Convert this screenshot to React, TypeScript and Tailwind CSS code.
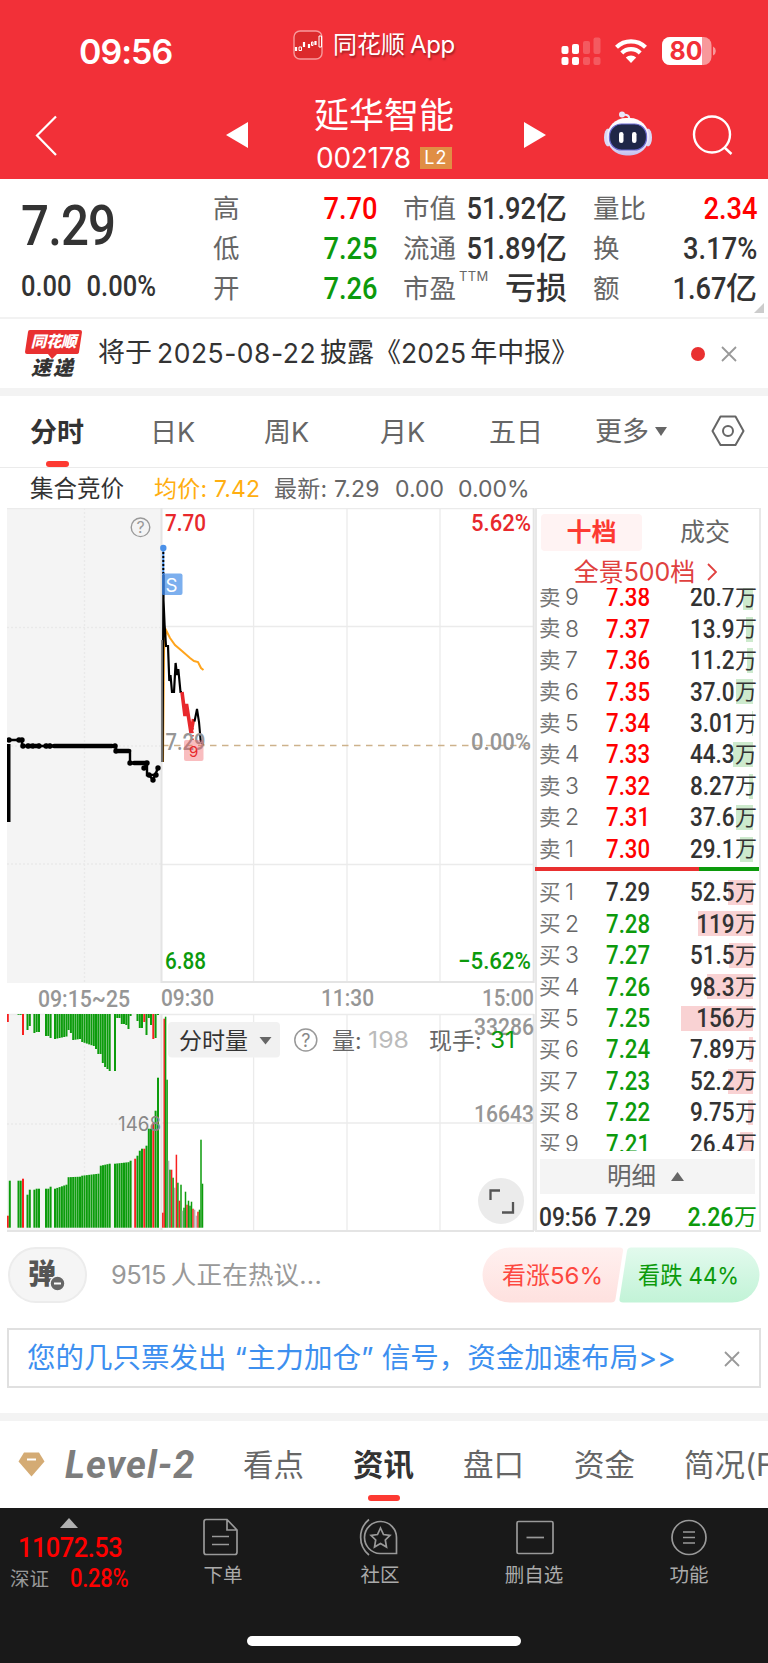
import type { ReactNode } from "react";

const GREEN = "#0c9a0c";
const RED = "#e8282c";

const sells = [
    { level: 9, price: "7.38", volume: "20.7", bar: 10 },
    { level: 8, price: "7.37", volume: "13.9", bar: 7 },
    { level: 7, price: "7.36", volume: "11.2", bar: 6 },
    { level: 6, price: "7.35", volume: "37.0", bar: 17 },
    { level: 5, price: "7.34", volume: "3.01", bar: 1.5 },
    { level: 4, price: "7.33", volume: "44.3", bar: 20 },
    { level: 3, price: "7.32", volume: "8.27", bar: 4 },
    { level: 2, price: "7.31", volume: "37.6", bar: 17 },
    { level: 1, price: "7.30", volume: "29.1", bar: 13 },
];

const buys = [
    { level: 1, price: "7.29", volume: "52.5", bar: 25 },
    { level: 2, price: "7.28", volume: "119", bar: 55 },
    { level: 3, price: "7.27", volume: "51.5", bar: 24 },
    { level: 4, price: "7.26", volume: "98.3", bar: 46 },
    { level: 5, price: "7.25", volume: "156", bar: 72 },
    { level: 6, price: "7.24", volume: "7.89", bar: 4 },
    { level: 7, price: "7.23", volume: "52.2", bar: 25 },
    { level: 8, price: "7.22", volume: "9.75", bar: 5 },
    { level: 9, price: "7.21", volume: "26.4", bar: 13 },
];

// [x, length, color] with r = red, g = green, n = neutral
type Bar = [number, number, "r" | "g" | "n"];

// fills a stretch of x positions, interpolating the bar length
function run(from: number, to: number, start: number, end: number): Bar[] {
    const n = Math.round((to - from) / 2.3);
    return Array.from({ length: n + 1 }, (_, i) => [
        from + ((to - from) * i) / Math.max(n, 1),
        start + ((end - start) * i) / Math.max(n, 1),
        "g",
    ] as Bar);
}

const auctionTop: Bar[] = [
    [7.8, 8, "r"], [18.5, 0.8, "g"], [20.7, 0.8, "g"], [23, 21, "r"], [27.5, 16, "g"], [29.8, 12, "g"],
    [34.4, 19, "g"], [36.7, 18, "g"], [39, 18, "g"],
    [46, 22, "g"], [48.3, 22, "g"], [50.6, 24, "g"],
    ...run(55, 66.5, 25, 22.5), [68.6, 16, "g"], [70.9, 19, "g"], ...run(73.2, 80, 26, 25),
    ...run(82.2, 93.8, 28, 32), [96, 35, "g"], [98.3, 40, "g"], [100.6, 40, "g"], [102.8, 49, "g"],
    [105.1, 53, "g"], [107.5, 55, "g"], [109.7, 57, "g"], [115, 57, "g"],
    [117.3, 4, "g"], [119.5, 4, "g"], [121.8, 10, "g"], [124, 10, "g"], [126.3, 11, "g"], [128.5, 15, "g"], [130.6, 2, "g"],
    [137.5, 7, "g"], [139.8, 14, "g"], [142, 14, "g"], [144.3, 8, "r"], [146.5, 21, "g"], [148.8, 4, "g"],
    [151, 11, "g"], [153.3, 25, "r"], [155.6, 24, "g"], [158, 1, "g"],
];

const auctionBottom: Bar[] = [
    [7.8, 12, "r"], [9.8, 47, "g"], [18.5, 47, "g"], [20.7, 47, "g"], [23, 49, "r"], [27.5, 33, "g"], [29.8, 38, "g"],
    [34.4, 38, "g"], [36.7, 39, "g"], [39, 39, "g"],
    [46, 39, "g"], [48.3, 39, "g"], [50.6, 41, "g"],
    ...run(55, 66.5, 39, 43), ...run(68.6, 80, 50.5, 51), ...run(82.2, 98.5, 52, 54),
    ...run(100.8, 109.7, 62, 64), ...run(115, 128.5, 64, 65.5), [130.6, 67, "g"],
    [135.2, 69, "r"], [137.5, 72, "g"], [139.8, 77, "g"], [142, 79, "g"], [144.3, 79, "r"], [146.5, 82, "g"],
    [148.8, 99, "g"], [151, 99, "g"], [153.3, 105, "r"], [155.6, 117, "g"], [158, 150, "g"],
];

const minuteVolume: Bar[] = [
    [162.8, 15, "r"], [164.2, 209, "r"], [165.6, 211, "g"], [167.1, 148, "g"], [168.6, 67, "n"], [170, 58, "g"],
    [171.6, 58, "r"], [173.1, 50, "g"], [174.7, 40, "n"], [176.4, 73, "r"], [177.9, 45, "g"], [179.4, 27, "r"],
    [181, 43, "g"], [182.5, 17, "n"], [184, 20, "g"], [185.5, 36, "g"], [187, 23, "r"], [188.5, 27, "g"],
    [190, 22, "g"], [191.5, 26, "g"], [193, 19, "r"], [194.6, 18, "n"], [196.4, 12, "n"], [198, 16, "r"],
    [199.5, 18, "g"], [201, 88, "g"], [202.5, 44, "g"],
];

const barColor = { r: "#f8201f", g: "#0c9c0c", n: "#b5b5b5" };

const auctionDots = [
    [9, 740], [19, 740], [22, 740], [23, 746], [28, 746], [33, 746], [39, 746], [46, 746], [50, 746],
    [115, 746], [116, 751], [130, 763], [144, 768], [147, 763], [149, 775], [153, 780], [156, 775], [158, 768],
];

const din = "font-['Roboto','Noto_Sans_CJK_SC',sans-serif] font-medium";

function Stat({ label, sup, value, unit, color }: { label: string; sup?: string; value?: string; unit?: string; color: string }) {
    return (
        <div className="flex h-10 items-center justify-between">
            <span className="flex text-[26.500px] text-[#666]">
                {label}
                {sup && <span className="-mt-[5px] ml-[3px] text-[13px] tracking-wide">{sup}</span>}
            </span>
            <span className={`${din} flex items-center ${color}`}>
                {value && <span className="origin-right scale-x-[0.88] text-[31px]">{value}</span>}
                {unit && <span className="text-[31px]">{unit}</span>}
            </span>
        </div>
    );
}

function Depth({ side, row, color, barClass }: { side: string; row: (typeof sells)[number]; color: string; barClass: string }) {
    return (
        <div className="relative flex h-[31.45px] shrink-0 items-center pl-[2px] pr-[2px]">
            <span className={`absolute right-[6px] top-[3px] h-[25px] ${barClass}`} style={{ width: row.bar }} />
            <span className="relative w-[26px] text-[21.500px] text-[#777]">{side}</span>
            <span className="relative w-[41px] text-[23px] font-light text-[#666]">{row.level}</span>
            <span className={`${din} relative origin-left scale-x-[0.89] text-[25px] ${color}`}>{row.price}</span>
            <span className={`${din} relative ml-auto flex items-center text-[25px] text-[#333]`}>
                <span className="origin-right scale-x-[0.9]">{row.volume}</span>
                <span className="text-[22px] font-normal">万</span>
            </span>
        </div>
    );
}

function Label({ x, y, w, color, size = 24, children }: { x: number; y: number; w: number; color: string; size?: number; children: string }) {
    return (
        <text x={x} y={y} fill={color} fontSize={size} textLength={w} lengthAdjust="spacingAndGlyphs" className="font-['Roboto'] font-medium">
            {children}
        </text>
    );
}

function Bars({ data, base, dir, width }: { data: Bar[]; base: number; dir: 1 | -1; width: number }) {
    return (
        <g>
            {data.map(([x, len, c], i) => (
                <rect key={i} x={x - width / 2} y={dir === 1 ? base : base - len} width={width} height={len} fill={barColor[c]} />
            ))}
        </g>
    );
}

function Chart() {
    return (
        <svg className="block shrink-0" width="528" height="724" viewBox="7 508 528 724">
            <rect x="7" y="508" width="154" height="475" fill="#f4f4f4" />
            <rect x="7" y="1014" width="154" height="217" fill="#f4f4f4" />
            <g stroke="#ebebeb" strokeWidth="1.3" fill="none">
                <path d="M7 508.6H534M161 626.5H534M161 864.5H534M7 1014.5H534M161 1123H534" />
                <path d="M253.6 508V982M347 508V982M440 508V982M253.6 1014V1231M347 1014V1231M440 1014V1231" />
                <path d="M7 627.5H161M7 746H161M7 864H161M84.5 508V982M7 1124H161M84.5 1014V1231" strokeDasharray="2 2" stroke="#e9e9e9" />
                <path d="M161 982H534M7 1231H534M161.5 508V983M161.5 1014V1231M533.7 508V983M533.7 1014V1231" strokeWidth="2" stroke="#e4e4e4" />
            </g>
            <path d="M162 745.5H533" stroke="#cdb28c" strokeWidth="1.3" strokeDasharray="6.5 5.5" />

            <path d="M163 762L164 650L166 630L170 638L175 645L182 651L190 658L194 661L198 662L201 668L203.5 670" fill="none" stroke="#ffa41c" strokeWidth="2" />
            <path d="M162.5 762L163.5 575V600L164.6 625L166 646H168L169.3 681L170.5 675L172 692H174L175.6 663L177 675L178.3 669L180.5 692H182" fill="none" stroke="#000" strokeWidth="2.2" />
            <path d="M162 640V762" stroke="#777" strokeWidth="1.8" />
            <path d="M182 692L185 716L186.5 704L191 733L193.5 719" fill="none" stroke="#e8282c" strokeWidth="3.6" />
            <path d="M193 721V742" stroke="#e8282c" strokeWidth="1.5" strokeDasharray="1.5 2" />
            <path d="M194.5 721.5L197 709L199 722L200.7 741L203.5 745" fill="none" stroke="#000" strokeWidth="2.1" />
            <path d="M163.3 548V574" stroke="#4a90e8" strokeWidth="2" />
            <path d="M163.3 552V574" stroke="#000" strokeWidth="2" strokeDasharray="2 2" />
            <circle cx="163.3" cy="548" r="3.2" fill="#4a90e8" />
            <rect x="162" y="573.5" width="20.5" height="21.5" rx="2" fill="#4a90e8" fillOpacity="0.72" />
            <path d="M163.5 573V595" stroke="#2f6dc0" strokeWidth="2" />
            <text x="165.5" y="592" fontSize="19" fill="#fff" textLength="12" lengthAdjust="spacingAndGlyphs" className="font-['Inter']">S</text>

            <path d="M8.5 744V822" stroke="#000" strokeWidth="4" />
            <path d="M9 740H22V746H116V751H130V763H147V775H156M144 768L147 763M149 775L153 780L158 768" fill="none" stroke="#000" strokeWidth="2.4" />
            <path d="M54 746H112M28 746H32M134 763H146M118 751H129" stroke="#000" strokeWidth="4.6" strokeLinecap="round" />
            <path d="M35 746H40M46 746H51" stroke="#000" strokeWidth="4.5" />
            {auctionDots.map(([x, y], i) => (
                <circle key={i} cx={x} cy={y} r="2.7" />
            ))}

            <Label x={165.5} y={750} w={40} color="#969696">7.29</Label>
            <rect x="184" y="740" width="19.5" height="21" rx="2" fill="#f05a60" fillOpacity="0.4" />
            <text x="189" y="757" fontSize="15" fill={RED} className="font-['Inter']">9</text>
            <Label x={165} y={531} w={41} color={RED}>7.70</Label>
            <Label x={471} y={531} w={60} color={RED}>5.62%</Label>
            <Label x={471} y={750} w={60} color="#969696">0.00%</Label>
            <Label x={165} y={969} w={41} color={GREEN}>6.88</Label>
            <Label x={458} y={969} w={73} color={GREEN}>−5.62%</Label>
            <Label x={38} y={1007} w={92} color="#969696">09:15~25</Label>
            <Label x={161} y={1006} w={53} color="#969696">09:30</Label>
            <Label x={321} y={1006} w={53} color="#969696">11:30</Label>
            <Label x={482} y={1006} w={52} color="#969696">15:00</Label>
            <circle cx="140.5" cy="527.3" r="9.3" fill="none" stroke="#999" strokeWidth="1.4" />
            <text x="140.5" y="533" fontSize="16" textAnchor="middle" fill="#999" className="font-['Inter']">?</text>

            <Bars data={auctionTop} base={1014} dir={1} width={2} />
            <Bars data={auctionBottom} base={1227.7} dir={-1} width={2} />
            <Bars data={minuteVolume} base={1227.7} dir={-1} width={1.5} />
            <text x="118" y="1131" fontSize="20" fill="#888" textLength="43" lengthAdjust="spacingAndGlyphs" className="font-['Inter']">1468</text>

            <rect x="168" y="1022" width="112" height="35.5" rx="4" fill="#f1f1f1" />
            <path d="M259.5 1037H271.5L265.5 1044.5Z" fill="#666" />
            <circle cx="305.8" cy="1040" r="11" fill="none" stroke="#999" strokeWidth="1.5" />
            <text x="305.8" y="1046.5" fontSize="18" textAnchor="middle" fill="#888" className="font-['Inter']">?</text>
            <Label x={474} y={1034.5} w={60} color="#969696">33286</Label>
            <Label x={474} y={1121.5} w={60} color="#969696">16643</Label>
            <g fontSize="23">
                <text x="179" y="1048.5" fill="#333">分时量</text>
                <text x="332" y="1048.5" fill="#666">量:</text>
                <text x="368" y="1048" fill="#bbb" textLength="41" lengthAdjust="spacingAndGlyphs">198</text>
                <text x="429" y="1048.5" fill="#666">现手:</text>
                <text x="490" y="1048" fill={GREEN} textLength="25" lengthAdjust="spacingAndGlyphs">31</text>
            </g>

            <circle cx="501" cy="1201" r="23" fill="#ebebeb" />
            <path d="M490.5 1200V1190.5H500M513 1202V1212.5H502" fill="none" stroke="#555" strokeWidth="2.3" />
        </svg>
    );
}

function StatusBar() {
    return (
        <div className="flex h-[86px] items-start text-white">
            <div className="ml-[79px] mt-[33px] w-[214px] text-[34px] font-semibold leading-[38px] tracking-[-1px]">09:56</div>
            <svg className="mt-[30px]" width="30" height="30" viewBox="0 0 30 30" fill="none" stroke="#fff">
                <rect x="1" y="1" width="28" height="28" rx="6" stroke="#f79a9c" strokeWidth="1.4" fill="#dc2a2c" />
                <path d="M3 17V21M11 12V17M16 14V18M22.5 11V15" strokeWidth="2.2" />
                <path d="M6 17H8.5V20.5H6ZM18.5 12H20V15.5H18.5ZM26 6H28.5V17H26Z" strokeWidth="1" />
            </svg>
            <div className="ml-[10px] mt-[30px] flex w-[228px] items-center gap-[5px] text-[24px] leading-[30px] [text-shadow:1px_2px_2px_rgba(0,0,0,0.35)]">
                同花顺<span className="tracking-[-0.4px]">App</span>
            </div>
            <svg className="mt-[36px]" width="156" height="30" viewBox="561 36 156 30">
                <g fill="#fff">
                    <rect x="561.5" y="46" width="7" height="8" rx="2" />
                    <rect x="572" y="44" width="7" height="10" rx="2" />
                    <rect x="561.5" y="57" width="7" height="8" rx="2" />
                    <rect x="572" y="57" width="7" height="8" rx="2" />
                    <g opacity="0.2">
                        <rect x="583" y="41" width="7" height="13" rx="2" />
                        <rect x="593.5" y="37.5" width="7" height="16.5" rx="2" />
                        <rect x="583" y="57" width="7" height="8" rx="2" />
                        <rect x="593.5" y="57" width="7" height="8" rx="2" />
                    </g>
                    <path d="M631 63L625.8 57.6A7.6 7.6 0 0 1 636.2 57.6Z" />
                </g>
                <g fill="none" stroke="#fff" strokeWidth="4.2">
                    <path d="M616.5 47.2A20.8 20.8 0 0 1 645.5 47.2" />
                    <path d="M621.8 53A13 13 0 0 1 640.2 53" />
                </g>
                <rect x="662" y="37" width="49.5" height="28" rx="8" fill="#f8989b" />
                <path d="M670 37H702V65H670A8 8 0 0 1 662 57V45A8 8 0 0 1 670 37Z" fill="#fff" />
                <path d="M713 46.5A5 5 0 0 1 713 55.5Z" fill="#f8989b" />
                <text x="669.5" y="60" fontSize="25" fill="#f23038" textLength="33" lengthAdjust="spacingAndGlyphs" className="font-['Inter'] font-bold">80</text>
            </svg>
        </div>
    );
}

function TitleBar() {
    return (
        <div className="flex h-[93px] items-start text-white">
            <svg className="ml-[34px] mt-[29px]" width="24" height="42" viewBox="0 0 24 42" fill="none" stroke="#fff" strokeWidth="2.2">
                <path d="M22 1.5L3 20.5L22 40" />
            </svg>
            <svg className="ml-[168px] mt-9" width="22" height="26" viewBox="0 0 22 26" fill="#fff">
                <path d="M0 13L22 0V26Z" />
            </svg>
            <div className="ml-[46px] w-[180px] text-center">
                <div className="mt-[8px] text-[35px] leading-[42px]">延华智能</div>
                <div className="mt-[7px] flex items-center justify-center gap-[9px] leading-[30px]">
                    <span className="text-[28px] tracking-[-0.3px]">002178</span>
                    <span className="h-[22px] w-8 bg-[#e08e45] text-[18px] leading-[22px] tracking-[1px]">L2</span>
                </div>
            </div>
            <svg className="ml-[50px] mt-9" width="22" height="26" viewBox="0 0 22 26" fill="#fff">
                <path d="M22 13L0 0V26Z" />
            </svg>
            <svg className="ml-[57px] mt-[25px]" width="50" height="47" viewBox="0 0 50 47">
                <defs>
                    <linearGradient id="shell" x1="0" y1="0" x2="0" y2="1">
                        <stop offset="0" stopColor="#fff" />
                        <stop offset="0.7" stopColor="#e6e4fa" />
                        <stop offset="1" stopColor="#c3bfee" />
                    </linearGradient>
                </defs>
                <path d="M26 9C27 5 24 3 20 4" fill="none" stroke="#e8e6fb" strokeWidth="2" />
                <circle cx="19" cy="3.5" r="3" fill="#e8e6fb" />
                <ellipse cx="5" cy="26.5" rx="4" ry="9" fill="#dad8f5" />
                <ellipse cx="45" cy="26.5" rx="4" ry="9" fill="#dad8f5" />
                <rect x="4" y="7" width="42" height="37.5" rx="19" fill="url(#shell)" />
                <rect x="6.5" y="13" width="37" height="26" rx="12" fill="#1f2747" stroke="#6a6ad0" strokeWidth="1.2" />
                <rect x="16" y="21" width="4.5" height="11" rx="2.2" fill="#fff" />
                <rect x="29" y="21" width="4.5" height="11" rx="2.2" fill="#fff" />
            </svg>
            <svg className="ml-[39px] mt-[28px]" width="42" height="42" viewBox="0 0 42 42" fill="none" stroke="#fff" strokeWidth="2.4">
                <circle cx="20" cy="20.5" r="18" />
                <path d="M32.5 33.5L39.5 40" />
            </svg>
        </div>
    );
}

function Quote() {
    return (
        <div className="relative flex h-[140px] border-b-2 border-[#f2f2f2]">
            <div className="w-[213px] pl-[21px] text-[#333]">
                <div className={`${din} mt-[19px] origin-left scale-x-[0.88] text-[56px] leading-[56px] tracking-[-1px]`}>7.29</div>
                <div className={`${din} mt-[17px] flex origin-left scale-x-[0.88] gap-[17px] text-[29px] leading-[30px]`}>
                    <span>0.00</span>
                    <span>0.00%</span>
                </div>
            </div>
            <div className="w-[164px] pt-[9px] leading-none">
                <Stat label="高" value="7.70" color="text-[#f00]" />
                <Stat label="低" value="7.25" color="text-[#0c9a0c]" />
                <Stat label="开" value="7.26" color="text-[#0c9a0c]" />
            </div>
            <div className="ml-[26px] w-[164px] pt-[9px] leading-none">
                <Stat label="市值" value="51.92" unit="亿" color="text-[#333]" />
                <Stat label="流通" value="51.89" unit="亿" color="text-[#333]" />
                <Stat label="市盈" sup="TTM" unit="亏损" color="text-[#333]" />
            </div>
            <div className="ml-[26px] w-[164px] pt-[9px] leading-none">
                <Stat label="量比" value="2.34" color="text-[#f00]" />
                <Stat label="换" value="3.17%" color="text-[#333]" />
                <Stat label="额" value="1.67" unit="亿" color="text-[#333]" />
            </div>
            <svg className="absolute bottom-[4px] right-[4px]" width="10" height="10" viewBox="0 0 10 10">
                <path d="M10 0V10H0Z" fill="#ccc" />
            </svg>
        </div>
    );
}

function Cross() {
    return (
        <svg width="16" height="16" viewBox="0 0 16 16" fill="none" stroke="#999" strokeWidth="1.8">
            <path d="M1 1L15 15M15 1L1 15" />
        </svg>
    );
}

function Notice() {
    return (
        <div className="flex h-[69px] items-center">
            <div className="relative ml-[25px] h-12 w-[57px]">
                <svg className="absolute inset-0" width="57" height="30" viewBox="0 0 57 30">
                    <path d="M5 0H55Q57 0 57 2L54 22Q54 24 51 24H32L27 29L23 24H2Q0 24 0 22L3 2Q3 0 5 0Z" fill="#e93030" />
                </svg>
                <div className="relative flex h-6 items-center justify-center text-[15.500px] font-black italic tracking-[-0.4px] text-white">同花顺</div>
                <div className="relative mt-[3px] pr-1 text-center text-[20px] font-black italic leading-[22px] tracking-[-1px] text-[#333]">速 递</div>
            </div>
            <div className="ml-[16px] flex items-center whitespace-nowrap text-[27px] text-[#333]">
                <span>将于</span>
                <span className="ml-[5px] text-[26.500px] tracking-[0.5px]">2025-08-22</span>
                <span className="ml-[4px]">披露《</span>
                <span className="text-[26.500px]">2025</span>
                <span className="ml-[4px]">年中报》</span>
            </div>
            <span className="ml-auto mr-4 h-[14px] w-[14px] shrink-0 rounded-full bg-[#e93030]" />
            <span className="mr-[31px]"><Cross /></span>
        </div>
    );
}

function PeriodTabs() {
    return (
        <div className="flex h-[72px] border-b border-[#ebebeb] text-[27px] leading-[74px] text-[#666]">
            <div className="ml-[30px] flex w-[120px] flex-col">
                <span className="h-[65px] font-bold text-[#333]">分时</span>
                <span className="ml-[16px] h-[6px] w-[23px] rounded-full bg-[#fd3a32]" />
            </div>
            <span className="w-[114px]">日K</span>
            <span className="w-[116px]">周K</span>
            <span className="w-[109px]">月K</span>
            <span className="w-[106px]">五日</span>
            <span className="flex w-[116px] items-center gap-[6px]">
                更多
                <svg width="12" height="9" viewBox="0 0 12 9" fill="#666">
                    <path d="M0 0H12L6 9Z" />
                </svg>
            </span>
            <svg className="mt-[19px]" width="34" height="32" viewBox="0 0 34 32" fill="none" stroke="#666" strokeWidth="2">
                <path d="M9.5 1.5H24.5L32.5 16L24.5 30H9.5L1.5 16Z" strokeLinejoin="round" />
                <circle cx="17" cy="16" r="5" />
            </svg>
        </div>
    );
}

function PriceInfo() {
    return (
        <div className="flex h-10 items-center whitespace-nowrap pt-[2px] text-[23px] text-[#666]">
            <span className="ml-[30px] w-[124px] text-[23.500px] text-[#333]">集合竞价</span>
            <span className="w-[120px] tracking-[0.2px] text-[#ffae10]">均价: 7.42</span>
            <span className="w-[121px] tracking-[0.2px]">最新: 7.29</span>
            <span className="w-[63px]">0.00</span>
            <span>0.00%</span>
        </div>
    );
}

function OrderBook() {
    return (
        <div className="flex h-[724px] w-[226px] flex-col border-2 border-t border-[#e8e8e8] leading-none *:shrink-0">
            <div className="mx-1 mt-[5px] flex h-[37px] text-center text-[25px] leading-[37px]">
                <span className="w-[101px] rounded bg-[#fff3f3] font-bold text-[#fd3a32]">十档</span>
                <span className="ml-[26px] w-[74px] text-[#666]">成交</span>
            </div>
            <div className="flex h-[37px] items-center justify-center gap-3 pr-[5px] pt-[5px] text-[25px] text-[#e0403e]">
                <span>全景500档</span>
                <svg width="10" height="18" viewBox="0 0 10 18" fill="none" stroke="#e0403e" strokeWidth="1.8">
                    <path d="M1 1L9 9L1 17" />
                </svg>
            </div>
            <div className="flex h-[279px] flex-col justify-end overflow-hidden pb-[2px]">
                {sells.map((row) => (
                    <Depth key={row.level} side="卖" row={row} color="text-[#f00]" barClass="bg-[#cdeacd]" />
                ))}
            </div>
            <div className="-ml-[2px] flex h-[4px]">
                <span className="w-[164px] bg-[#e93030]" />
                <span className="grow bg-[#0c9a0c]" />
            </div>
            <div className="h-[280px] overflow-hidden pt-[6px]">
                {buys.map((row, i) => (
                    <Depth key={row.level} side="买" row={row} color={i === 0 ? "text-[#333]" : "text-[#0c9a0c]"} barClass="bg-[#f9d2d3]" />
                ))}
            </div>
            <div className="ml-[3px] mr-1 mt-2 flex h-[35px] items-center gap-[15px] bg-[#f4f4f4] pl-[67px] text-[24.500px] text-[#666]">
                明细
                <svg width="13" height="9" viewBox="0 0 13 9" fill="#666">
                    <path d="M6.5 0L13 9H0Z" />
                </svg>
            </div>
            <div className={`${din} flex h-[36px] items-center pl-[2px] pr-[2px] pt-[11px] text-[25px] text-[#333]`}>
                <span className="w-[66px] origin-left scale-x-[0.91]">09:56</span>
                <span className="origin-left scale-x-[0.93]">7.29</span>
                <span className="ml-auto flex items-center text-[#0c9a0c]">
                    <span className="origin-right scale-x-[0.93]">2.26</span>
                    <span className="text-[23px] font-normal">万</span>
                </span>
            </div>
        </div>
    );
}

function Poll() {
    return (
        <div className="mt-[15px] flex h-14 items-center pl-2">
            <div className="relative flex h-14 w-[79px] items-center rounded-full border-2 border-[#ececec] bg-[#f5f5f5] pb-[2px] pl-[18px] text-[28px] font-black text-[#555]">
                弹
                <svg className="absolute left-[39px] top-[26px]" width="17" height="17" viewBox="0 0 17 17">
                    <circle cx="8.5" cy="8.5" r="7.5" fill="#666" stroke="#f5f5f5" strokeWidth="1.5" />
                    <path d="M5 8.5H12" stroke="#fff" strokeWidth="2" />
                </svg>
            </div>
            <span className="ml-6 flex w-[371px] gap-[5px] whitespace-nowrap text-[25.500px] text-[#999]">
                <span className="tracking-[-0.6px]">9515</span>
                <span className="tracking-[0.2px]">人正在热议...</span>
            </span>
            <svg width="279" height="56" viewBox="0 0 279 56">
                <defs>
                    <linearGradient id="up" x1="0" y1="0" x2="0" y2="1">
                        <stop offset="0" stopColor="#fff0ef" />
                        <stop offset="1" stopColor="#fee1df" />
                    </linearGradient>
                    <linearGradient id="down" x1="0" y1="0" x2="0" y2="1">
                        <stop offset="0" stopColor="#e2faed" />
                        <stop offset="1" stopColor="#c2f3d7" />
                    </linearGradient>
                </defs>
                <path d="M28 0.5H138Q141.5 0.5 141 4L133.5 52Q133 55.5 129 55.5H28A27.5 27.5 0 0 1 28 0.5Z" fill="url(#up)" />
                <path d="M149 0.5H250A27.5 27.5 0 0 1 250 55.5H141Q137 55.5 137.5 52L145 4Q145.5 0.5 149 0.5Z" fill="url(#down)" />
                <g fontSize="23.5">
                    <text x="20" y="37" fill="#fd4840" textLength="101" lengthAdjust="spacingAndGlyphs">看涨56%</text>
                    <text x="156" y="37" fill="#0c9a0c" textLength="101" lengthAdjust="spacingAndGlyphs">看跌 44%</text>
                </g>
            </svg>
        </div>
    );
}

function NewsTabs() {
    return (
        <div className="flex h-[87px] overflow-hidden whitespace-nowrap text-[30.500px] leading-[88px] text-[#666]">
            <svg className="ml-[18px] mt-[31px] shrink-0" width="27" height="26" viewBox="0 0 27 26">
                <path d="M6 0.5H21L26.5 9.5L13.5 24.5L0.5 9.5Z" fill="#d4ab74" />
                <path d="M9 7.5H18" stroke="#fff" strokeWidth="2" />
            </svg>
            <span className="ml-[20px] w-[178px] shrink-0 font-['Roboto'] text-[38px] font-bold italic tracking-[1px] text-[#7d7d7d]">Level-2</span>
            <span className="w-[110px] shrink-0">看点</span>
            <span className="flex w-[110px] shrink-0 flex-col font-bold text-[#333]">
                <span className="h-[74px]">资讯</span>
                <span className="ml-[15px] h-[6px] w-8 rounded-full bg-[#fd3a32]" />
            </span>
            <span className="w-[111px] shrink-0">盘口</span>
            <span className="w-[110px] shrink-0">资金</span>
            <span className="shrink-0">简况(F10)</span>
        </div>
    );
}

function NavItem({ label, className, children }: { label: string; className: string; children: ReactNode }) {
    return (
        <div className={`flex flex-col items-center ${className}`}>
            <svg className="mt-[9px]" width="42" height="40" viewBox="0 0 42 40" fill="none" stroke="#999" strokeWidth="1.7">
                {children}
            </svg>
            <span className="mt-[7px] text-[19.500px] leading-[22px] text-[#aaa]">{label}</span>
        </div>
    );
}

function BottomNav() {
    return (
        <div className="flex h-[155px] flex-col bg-[#191919]">
            <div className="flex h-[128px]">
                <div className="w-[140px]">
                    <svg className="ml-[60px] mt-[10px]" width="18" height="10" viewBox="0 0 18 10" fill="#b0b0b0">
                        <path d="M9 0L18 10H0Z" />
                    </svg>
                    <div className={`${din} ml-[18px] mt-[6px] origin-left scale-x-[0.91] text-[28px] leading-[28px] tracking-[-0.6px] text-[#f00]`}>11072.53</div>
                    <div className="mt-[5px] flex items-center leading-[24px]">
                        <span className="ml-[10px] w-[60px] text-[19.500px] text-[#999]">深证</span>
                        <span className={`${din} origin-left scale-x-[0.88] text-[25px] tracking-[-0.3px] text-[#f00]`}>0.28%</span>
                    </div>
                </div>
                <NavItem label="下单" className="ml-[43px] w-20">
                    <path d="M2 5Q2 2.5 4 2.5H25L35 13V35Q35 37.5 33 37.5H4Q2 37.5 2 35ZM25 2.5V13H35M10 19.5H27M10 27.5H27" />
                </NavItem>
                <NavItem label="社区" className="ml-[77px] w-20">
                    <path d="M10 2.5A23 23 0 0 0 10 38M37.5 36.5H21A16 16 0 1 1 37.5 21Z" />
                    <path d="M21.5 11L24.5 17.5L31 18.3L26.3 23L27.5 30L21.5 26.5L15.5 30L16.7 23L12 18.3L18.5 17.5Z" />
                </NavItem>
                <NavItem label="删自选" className="ml-[74px] w-20">
                    <rect x="4" y="4.5" width="36" height="32" rx="1.5" />
                    <path d="M13.5 20.5H31" />
                </NavItem>
                <NavItem label="功能" className="ml-[75px] w-20">
                    <circle cx="21" cy="20.5" r="17" />
                    <path d="M15 15H27M15 20.5H27M15 26H27" />
                </NavItem>
            </div>
            <div className="ml-[247px] h-[10px] w-[274px] rounded-full bg-white" />
        </div>
    );
}

export default function App() {
    return (
        <div className="h-[1663px] w-[768px] overflow-hidden bg-white font-['Inter','Noto_Sans_CJK_SC',sans-serif]">
            <div className="bg-[#f23038]">
                <StatusBar />
                <TitleBar />
            </div>
            <Quote />
            <Notice />
            <div className="h-2 bg-[#f3f3f3]" />
            <PeriodTabs />
            <PriceInfo />
            <div className="flex pl-[7px]">
                <Chart />
                <OrderBook />
            </div>
            <Poll />
            <div className="ml-[7px] mt-[25px] flex h-[60px] w-[754px] items-center border-2 border-[#e0e0e0] pl-[18px] pt-px text-[28.500px] text-[#3d8fef]">
                <span className="whitespace-nowrap">您的几只票发出 “主力加仓” 信号，资金加速布局&gt;&gt;</span>
                <span className="ml-auto mr-[19px]"><Cross /></span>
            </div>
            <div className="mt-[25px] h-2 bg-[#f3f3f3]" />
            <NewsTabs />
            <BottomNav />
        </div>
    );
}
